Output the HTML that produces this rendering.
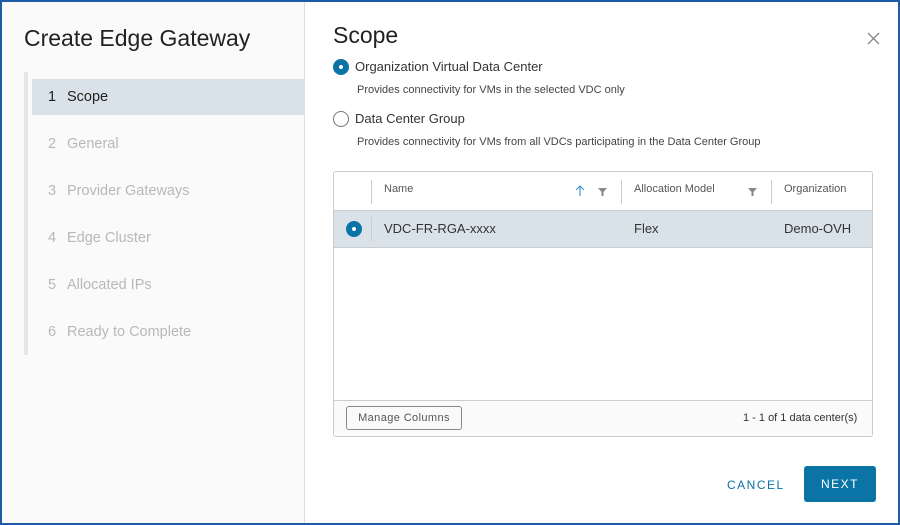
<!DOCTYPE html>
<html><head><style>
*{box-sizing:border-box;margin:0;padding:0}
body{width:900px;height:525px;overflow:hidden;font-family:"Liberation Sans",sans-serif;background:#fff;position:relative;color:#333}
.frame{position:absolute;left:0;top:0;width:900px;height:525px;border:2px solid #1d5ba6}
.left{position:absolute;left:2px;top:2px;width:303px;height:521px;background:#fafafa;border-right:1px solid #ddd}
.t{position:absolute;font-size:23px;color:#222;white-space:nowrap}
.bar{position:absolute;left:24px;top:72px;width:4px;height:283px;background:#e6e6e6}
.step{position:absolute;left:48px;font-size:14.5px;color:#b8b8b8;white-space:nowrap}
.step b{font-weight:normal;display:inline-block;width:19px}
.act{position:absolute;left:32px;top:79px;width:273px;height:36px;background:#d8e2e8}
.radio{position:absolute;width:16px;height:16px;border-radius:50%}
.on{background:#0a74a6;}
.on:after{content:"";position:absolute;left:6px;top:6px;width:4px;height:4px;border-radius:50%;background:#fff}
.off{border:1px solid #777;background:#fff}
.s{position:absolute;font-size:13px;white-space:nowrap}
.x{position:absolute;font-size:11px;color:#444;white-space:nowrap}
.h{position:absolute;font-size:11px;color:#565656;white-space:nowrap}
.grid{position:absolute;left:333px;top:171px;width:540px;height:266px;border:1px solid #ccc;border-radius:3px;overflow:hidden}
.sep{position:absolute;top:8px;width:1px;height:24px;background:#ccc}
</style></head><body>
<div class="left"></div>
<div class="t" style="left:24px;top:25px">Create Edge Gateway</div>
<div class="bar"></div>
<div class="act"></div>
<div class="step" style="top:89px;color:#222"><b>1</b>Scope</div>
<div class="step" style="top:136px"><b>2</b>General</div>
<div class="step" style="top:183px"><b>3</b>Provider Gateways</div>
<div class="step" style="top:230px"><b>4</b>Edge Cluster</div>
<div class="step" style="top:277px"><b>5</b>Allocated IPs</div>
<div class="step" style="top:324px"><b>6</b>Ready to Complete</div>

<div class="t" style="left:333px;top:22px">Scope</div>
<svg style="position:absolute;left:867px;top:32px" width="13" height="13"><path d="M1 1L12 12M12 1L1 12" stroke="#888" stroke-width="1.3"/></svg>
<div class="radio on" style="left:333px;top:59px"></div>
<div class="s" style="left:355px;top:59px">Organization Virtual Data Center</div>
<div class="x" style="left:357px;top:84px">Provides connectivity for VMs in the selected VDC only</div>
<div class="radio off" style="left:333px;top:111px"></div>
<div class="s" style="left:355px;top:111px">Data Center Group</div>
<div class="x" style="left:357px;top:136px">Provides connectivity for VMs from all VDCs participating in the Data Center Group</div>

<div class="grid">
 <div class="sep" style="left:37px"></div>
 <div class="h" style="left:50px;top:11px">Name</div>
 <svg style="position:absolute;left:241px;top:13px" width="10" height="12"><path d="M5 11V1M1 5L5 1L9 5" stroke="#4a98c9" stroke-width="1.2" fill="none"/></svg>
 <svg style="position:absolute;left:264px;top:16px" width="9" height="9"><path d="M0 0H9L5.5 4V8H3.5V4Z" fill="#888"/></svg>
 <div class="sep" style="left:287px"></div>
 <div class="h" style="left:300px;top:11px">Allocation Model</div>
 <svg style="position:absolute;left:414px;top:16px" width="9" height="9"><path d="M0 0H9L5.5 4V8H3.5V4Z" fill="#888"/></svg>
 <div class="sep" style="left:437px"></div>
 <div class="h" style="left:450px;top:11px">Organization</div>
 <div style="position:absolute;left:0;top:38px;width:540px;height:38px;background:#d8e2e8;border-top:1px solid #ccc;border-bottom:1px solid #ccc"></div>
 <div class="radio on" style="left:12px;top:49px"></div>
 <div class="sep" style="left:37px;top:45px"></div>
 <div class="s" style="left:50px;top:49px">VDC-FR-RGA-xxxx</div>
 <div class="s" style="left:300px;top:49px">Flex</div>
 <div class="s" style="left:450px;top:49px">Demo-OVH</div>
 <div style="position:absolute;left:0;top:228px;width:540px;height:38px;background:#fafafa;border-top:1px solid #ccc"></div>
 <div style="position:absolute;left:12px;top:234px;width:116px;height:24px;border:1px solid #888;border-radius:3px;font-size:11px;color:#555;line-height:22px;text-align:center;letter-spacing:.4px">Manage Columns</div>
 <div class="x" style="left:409px;top:240px;color:#333">1 - 1 of 1 data center(s)</div>
</div>
<div style="position:absolute;left:727px;top:478px;font-size:12px;color:#0a74a6;letter-spacing:1.5px">CANCEL</div>
<div style="position:absolute;left:804px;top:466px;width:72px;height:36px;background:#0a74a6;border-radius:3px;color:#fff;font-size:12px;letter-spacing:1.5px;line-height:37px;text-align:center">NEXT</div>
<div class="frame"></div>
</body></html>
